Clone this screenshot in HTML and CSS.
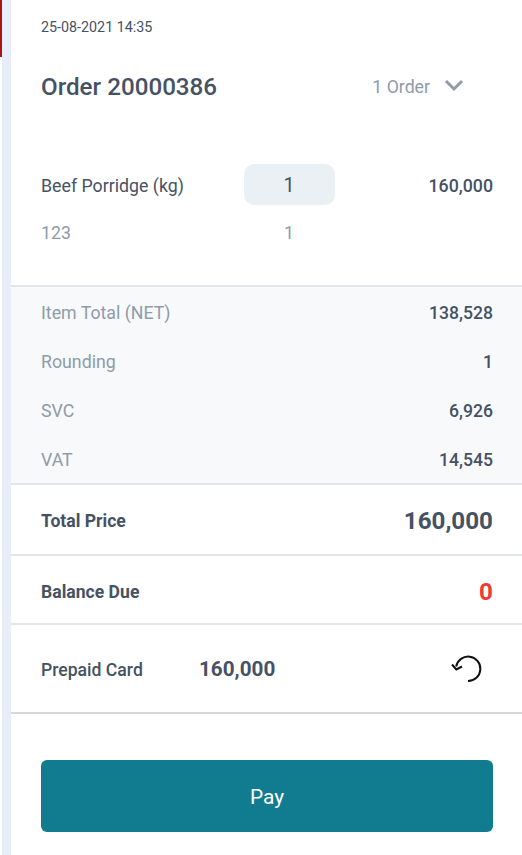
FILE: index.html
```html
<!DOCTYPE html>
<html lang="en">
<head>
<meta charset="utf-8">
<title>Order 20000386</title>
<link rel="stylesheet" href="styles.css">
</head>
<body>
<div class="shell">
  <div class="rail"><div class="rail-mark"></div></div>
  <main class="main">
    <header class="head">
      <div class="date">25-08-2021 14:35</div>
      <div class="title-row">
        <h1 class="title">Order 20000386</h1>
        <div class="orders">
          <span>1 Order</span>
          <svg class="chev" width="20" height="13" viewBox="0 0 20 13"><path d="M2 2l8 8 8-8" fill="none" stroke="#8e9baa" stroke-width="3"/></svg>
        </div>
      </div>
    </header>
    <section class="items">
      <div class="item">
        <span class="item-name">Beef Porridge (kg)</span>
        <span class="qty-box">1</span>
        <span class="item-price">160,000</span>
      </div>
      <div class="item sub">
        <span class="item-name">123</span>
        <span class="qty-plain">1</span>
        <span class="item-price"></span>
      </div>
    </section>
    <section class="breakdown">
      <div class="b-row"><span>Item Total (NET)</span><b>138,528</b></div>
      <div class="b-row"><span>Rounding</span><b>1</b></div>
      <div class="b-row"><span>SVC</span><b>6,926</b></div>
      <div class="b-row"><span>VAT</span><b>14,545</b></div>
    </section>
    <section class="t-row total">
      <span class="t-label">Total Price</span><span class="t-big">160,000</span>
    </section>
    <section class="t-row balance">
      <span class="t-label">Balance Due</span><span class="t-due">0</span>
    </section>
    <section class="t-row prepaid">
      <span class="p-label">Prepaid Card</span>
      <span class="p-amount">160,000</span>
      <svg class="undo" width="32" height="30" viewBox="0 0 32 30"><path d="M6.200 12.500A12.200 12.200 0 1 1 18 27" fill="none" stroke="#111" stroke-width="2"/><path d="M2 10.500L6.300 15.500L12 12.500" fill="none" stroke="#111" stroke-width="2"/></svg>
    </section>
    <div class="pay-wrap"><button class="pay" type="button">Pay</button></div>
  </main>
</div>
</body>
</html>
```
FILE: styles.css
```css
* { box-sizing: border-box; }
html, body { margin: 0; padding: 0; height: 100%; background: #fff; }
body { font-family: Roboto, "Liberation Sans", sans-serif; color: #465263; overflow: hidden; }
.shell { display: flex; height: 855px; }
.rail { width: 11px; flex: none; padding-left: 2px; background: #e8edf9; background-clip: content-box; position: relative; }
.rail-mark { position: absolute; left: 0; top: 0; width: 2px; height: 57px; background: #a81414; }
.main { flex: 1; min-width: 0; }
.head { padding: 0 29px 0 30px; height: 129px; }
.date { padding-top: 19px; font-size: 14.300px; line-height: 16px; }
.title-row { display: flex; align-items: center; justify-content: space-between; margin-top: 27px; height: 50px; }
.title { margin: 0; font-size: 24.200px; font-weight: 500; line-height: 50px; height: 50px; }
.orders { display: flex; align-items: center; gap: 14px; margin-right: 29px; font-size: 17.700px; color: #8e9baa; }
.orders span { white-space: nowrap; }
.chev { margin-top: -4px; flex: none; }
.items { height: 156px; padding: 35px 29px 0 30px; }
.item { display: flex; align-items: center; height: 41px; font-size: 17.750px; padding-top: 2px; }
.item.sub { height: 24px; margin-top: 16px; padding-top: 0; color: #8e9baa; }
.item-name { width: 203px; flex: none; }
.qty-box { width: 91px; height: 41px; margin-top: -2px; padding-right: 1px; flex: none; border-radius: 10px; background: #ebf0f4; font-size: 19.800px; line-height: 44px; text-align: center; }
.qty-plain { width: 91px; padding-right: 1px; flex: none; text-align: center; }
.item-price { flex: 1; text-align: right; font-weight: 500; }
.breakdown { height: 200px; padding: 1px 29px 0 30px; background: #f8f9fb; border-top: 2px solid #e2e5ea; border-bottom: 2px solid #e2e5ea; }
.b-row { display: flex; align-items: center; justify-content: space-between; height: 49px; font-size: 17.750px; color: #8e9baa; }
.b-row b { font-size: 17.600px; font-weight: 500; color: #465263; }
.t-row { display: flex; align-items: center; justify-content: space-between; padding: 0 29px 0 30px; border-bottom: 2px solid #e2e5ea; }
.total { height: 71px; padding-top: 3px; }
.balance { height: 69px; padding-top: 4px; }
.prepaid { height: 89px; padding-top: 3px; border-bottom-color: #d6d8db; justify-content: flex-start; }
.t-label { font-size: 17.600px; font-weight: 700; }
.t-big { font-size: 24.200px; font-weight: 700; }
.t-due { font-size: 24.200px; font-weight: 700; color: #ee3a33; }
.p-label { width: 158px; flex: none; font-size: 17.600px; font-weight: 500; }
.p-amount { font-size: 20.700px; font-weight: 700; margin-top: -2px; }
.undo { margin-left: auto; margin-right: 11px; margin-top: -2px; }
.pay-wrap { padding: 46px 29px 0 30px; }
.pay { display: block; width: 100%; height: 72px; padding-top: 3px; border: 0; border-radius: 6px; background: #117c90; color: #fff; font: 400 20.900px Roboto, "Liberation Sans", sans-serif; }
```
